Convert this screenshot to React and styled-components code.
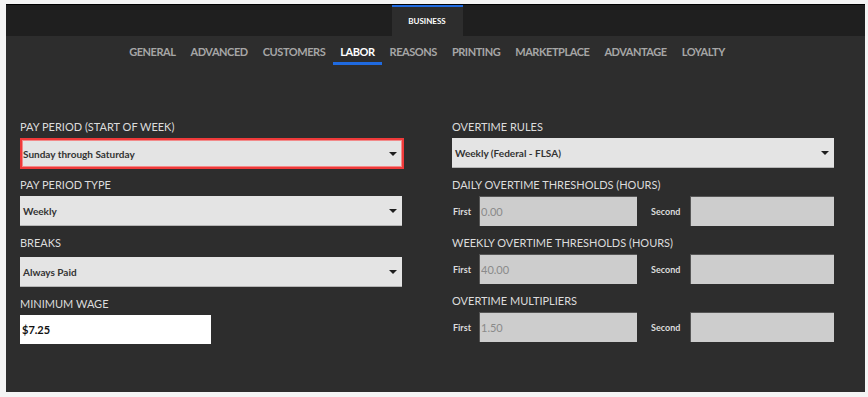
import React from 'react'
import styled, {createGlobalStyle} from 'styled-components'

const tabs = ['General', 'Advanced', 'Customers', 'Labor', 'Reasons', 'Printing', 'Marketplace', 'Advantage', 'Loyalty']

const thresholds = [
    {label: 'Daily Overtime Thresholds (Hours)', first: '0.00'},
    {label: 'Weekly Overtime Thresholds (Hours)', first: '40.00'},
    {label: 'Overtime Multipliers', first: '1.50'},
]

function Caret() {
    return (
        <svg width="8" height="4" viewBox="0 0 8 4">
            <path d="M0 0 L8 0 L4 4 Z" fill="#1e1e1e" />
        </svg>
    )
}

function App() {
    return (
        <>
        <GlobalStyle />
        <Page>
            <Panel>
                <TopBar>
                    <TopTab>Business</TopTab>
                </TopBar>
                <SubNav>
                    {tabs.map(t => (
                        <SubTab key={t} $active={t === 'Labor'}>{t}</SubTab>
                    ))}
                </SubNav>

                <Content>
                    <Column>
                        <Field>
                            <Label>Pay Period (Start of Week)</Label>
                            <Select $error>
                                <span>Sunday through Saturday</span>
                                <Caret />
                            </Select>
                        </Field>
                        <Field>
                            <Label>Pay Period Type</Label>
                            <Select><span>Weekly</span><Caret /></Select>
                        </Field>
                        <Field $push={3}>
                            <Label>Breaks</Label>
                            <Select><span>Always Paid</span><Caret /></Select>
                        </Field>
                        <Field>
                            <Label>Minimum Wage</Label>
                            <WageInput defaultValue="$7.25" />
                        </Field>
                    </Column>

                    <Column>
                        <Field>
                            <Label>Overtime Rules</Label>
                            <Select><span>Weekly (Federal - FLSA)</span><Caret /></Select>
                        </Field>
                        {thresholds.map(row => (
                            <Field key={row.label}>
                                <Label>{row.label}</Label>
                                <PairRow>
                                    <SmallLabel>First</SmallLabel>
                                    <GrayInput defaultValue={row.first} readOnly />
                                    <SmallLabel>Second</SmallLabel>
                                    <GrayInput defaultValue="" readOnly />
                                </PairRow>
                            </Field>
                        ))}
                    </Column>
                </Content>
            </Panel>
        </Page>
        </>
    )
}

export default App

const GlobalStyle = createGlobalStyle`
    body {
        margin: 0;
        background: #f4f4f4;
        font-family: Lato, "Open Sans", sans-serif;
    }
`;

const Page = styled.div`
    padding: 4px 3px 5px 6px;
`;

const Panel = styled.div`
    height: 388px;
    background: #2d2d2d;
    display: flex;
    flex-direction: column;
`;

const TopBar = styled.div`
    height: 31px;
    border-top: 1px solid #000;
    background: #1f1f1f;
    display: flex;
    justify-content: center;
    padding-right: 17px;
`;

const TopTab = styled.div`
    width: 71px;
    border-top: 2px solid #1f6ae0;
    background: #2d2d2d;
    color: #fff;
    font-size: 8px;
    font-weight: 700;
    text-transform: uppercase;
    display: flex;
    align-items: center;
    justify-content: center;
    padding-bottom: 2px;
`;

const SubNav = styled.div`
    display: flex;
    justify-content: center;
    gap: 1px;
    padding: 8px 17px 0 0;
`;

const SubTab = styled.div`
    padding: 0 7px 2px;
    line-height: 16px;
    font-size: 11px;
    font-weight: 700;
    letter-spacing: -0.45px;
    text-transform: uppercase;
    color: ${({$active}) => $active ? '#ffffff' : '#a6a6a6'};
    border-bottom: 3px solid ${({$active}) => $active ? '#1f6ae0' : 'transparent'};
    cursor: pointer;
`;

const Content = styled.div`
    display: grid;
    grid-template-columns: 382px 382px;
    column-gap: 50px;
    padding: 55px 0 0 14px;
`;

const Column = styled.div`
    display: flex;
    flex-direction: column;
    gap: 10px;
`;

const Field = styled.div`
    display: flex;
    flex-direction: column;
    gap: ${({$push}) => 4 + ($push || 0)}px;
`;

const Label = styled.div`
    font-size: 11px;
    line-height: 14px;
    color: #dcdcdc;
    text-transform: uppercase;
`;

const Select = styled.div`
    box-sizing: border-box;
    height: ${({$error}) => $error ? '31px' : '30px'};
    width: ${({$error}) => $error ? 'calc(100% + 2px)' : '100%'};
    margin-bottom: ${({$error}) => $error ? '-1px' : '0'};
    background: #e4e4e4;
    border: ${({$error}) => $error ? '2px solid #ef3a3a' : 'none'};
    box-shadow: ${({$error}) => $error ? 'inset 0 0 0 1px #f28a8a' : 'inset 0 -1px 0 #b5b5b5'};
    padding: ${({$error}) => $error ? '0 5px 0 1px' : '0 5px 0 3px'};
    display: flex;
    align-items: center;
    justify-content: space-between;
    font-size: 10px;
    font-weight: 700;
    color: #333;
    cursor: pointer;
`;

const WageInput = styled.input`
    box-sizing: border-box;
    width: 191px;
    height: 29px;
    border: none;
    outline: none;
    background: #fff;
    padding: 0 2px;
    font-family: Lato, "Open Sans", sans-serif;
    font-size: 11px;
    font-weight: 700;
    color: #111;
`;

const PairRow = styled.div`
    display: grid;
    grid-template-columns: 27px 158px 13px 40px 144px;
    align-items: center;
    height: 30px;

    & > :nth-child(3) {
        grid-column: 4;
    }
`;

const SmallLabel = styled.span`
    padding-left: 1px;
    font-size: 9px;
    font-weight: 700;
    color: #dcdcdc;
`;

const GrayInput = styled.input`
    box-sizing: border-box;
    width: 100%;
    height: 30px;
    border: none;
    outline: none;
    background: #cdcdcd;
    box-shadow: inset 1px 1px 0 #555;
    padding: 0 2px;
    font-family: Lato, "Open Sans", sans-serif;
    font-size: 11px;
    color: #8a8a8a;
`;
